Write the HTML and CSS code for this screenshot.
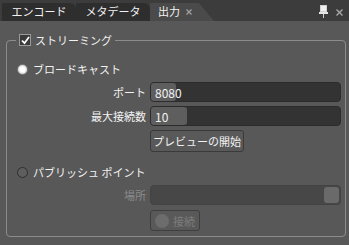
FILE: index.html
```html
<!DOCTYPE html>
<html lang="ja">
    <head>
        <meta charset="utf-8">
        <title>出力</title>
        <link rel="stylesheet" href="styles.css">
    </head>
    <body>
        <div class="tabbar">
            <div class="tab">エンコード</div>
            <div class="tab">メタデータ</div>
            <div class="tab active">出力
                <svg class="tab-close" width="6" height="6" viewBox="0 0 6 6">
                    <path d="M0.5 0.5 L5.5 5.5 M5.5 0.5 L0.5 5.5" stroke="#a0a0a0" stroke-width="1.3"/>
                </svg>
            </div>
            <div class="tab-tools">
                <svg class="pin" width="9" height="13" viewBox="0 0 9 13">
                    <rect x="1.5" y="0.5" width="6" height="6" fill="#f0f0f0" stroke="#cfcfcf"/>
                    <rect x="0" y="7" width="9" height="2" fill="#e6e6e6"/>
                    <rect x="4" y="9" width="1" height="4" fill="#d0d0d0"/>
                </svg>
                <svg class="close" width="7" height="7" viewBox="0 0 7 7">
                    <path d="M0.5 0.5 L6.5 6.5 M6.5 0.5 L0.5 6.5" stroke="#a8a8a8" stroke-width="1.4"/>
                </svg>
            </div>
        </div>

        <div class="panel">
            <fieldset class="group">
                <legend>
                    <span class="check">
                        <svg width="9" height="9" viewBox="0 0 9 9">
                            <path d="M1 4.5 L3.5 7.2 L8 1" fill="none" stroke="#ffffff" stroke-width="1.8"/>
                        </svg>
                    </span>
                    ストリーミング
                </legend>

                <div class="option">
                    <span class="radio on"></span>
                    ブロードキャスト
                </div>

                <div class="form">
                    <label>ポート</label>
                    <div class="field"><span class="fill" style="width: 25px"></span><span class="value">8080</span></div>
                    <label>最大接続数</label>
                    <div class="field"><span class="fill" style="width: 36px"></span><span class="value">10</span></div>
                    <span></span>
                    <div><button class="btn">プレビューの開始</button></div>
                </div>

                <div class="option second">
                    <span class="radio"></span>
                    パブリッシュ ポイント
                </div>

                <div class="form">
                    <label class="disabled">場所</label>
                    <div class="field off"><span class="thumb"></span></div>
                    <span></span>
                    <div><button class="btn off"><span class="dot"></span>接続</button></div>
                </div>
            </fieldset>
        </div>
    </body>
</html>
```

FILE: styles.css
```css
body {
    margin: 0;
    background-color: #585858;
    color: #f2f2f2;
    font-family: "Noto Sans CJK JP", "Noto Sans", sans-serif;
    font-size: 11px;
    width: 349px;
    height: 245px;
    overflow: hidden;
}

.tabbar {
    height: 21px;
    background-color: #3c3c3c;
    display: flex;
    align-items: flex-end;
    padding-left: 2px;
}

.tab {
    height: 18px;
    width: 74px;
    background-color: #2e2e2e;
    border-radius: 0 6px 0 0;
    display: flex;
    align-items: center;
    justify-content: center;
    line-height: 1;
    padding-bottom: 1px;
    box-sizing: border-box;
}

.tab.active {
    width: 64px;
    background-color: #4a4a4a;
    clip-path: polygon(0 0, 49px 0, 64px 100%, 0 100%);
    justify-content: flex-start;
    padding-left: 8px;
}

.tab-close {
    margin-left: 6px;
    margin-top: 1px;
}

.tab-tools {
    margin-left: auto;
    align-self: stretch;
    display: flex;
    align-items: flex-start;
    gap: 8px;
    padding: 5px 6px 0 0;
}

.tab-tools .close {
    margin-top: 4px;
}

.panel {
    padding: 12px 3px 0 6px;
}

.group {
    margin: 0;
    height: 204px;
    box-sizing: border-box;
    border: 1px solid #8c8c8c;
    border-radius: 4px;
    padding: 0 4px 0 10px;
}

.group legend {
    margin-left: -1px;
    padding: 0 3px 0 3px;
    display: flex;
    align-items: center;
    gap: 4px;
    line-height: 14px;
}

.check {
    width: 10px;
    height: 10px;
    border: 1px solid #9a9a9a;
    background-color: #3a3a3a;
    display: flex;
    align-items: center;
    justify-content: center;
}

.option {
    display: flex;
    align-items: center;
    gap: 5px;
    margin-top: 15px;
    height: 14px;
}

.option.second {
    margin-top: 13px;
}

.radio {
    width: 9px;
    height: 9px;
    border-radius: 50%;
    border: 1px solid #2e2e2e;
    background-color: #5e5e5e;
}

.radio.on {
    border-color: #7a7a7a;
    background: radial-gradient(circle, #ffffff 35%, #d8d8d8 70%, #b0b0b0 100%);
}

.form {
    display: grid;
    grid-template-columns: 129px 1fr;
    column-gap: 4px;
    row-gap: 4px;
    align-items: center;
    margin-top: 6px;
}

.form label {
    text-align: right;
}

.form label.disabled {
    color: #8c8c8c;
}

.field {
    position: relative;
    height: 20px;
    box-sizing: border-box;
    border: 1px solid #2c2c2c;
    border-radius: 4px;
    background-color: #333333;
    display: flex;
    align-items: center;
}

.field .fill {
    position: absolute;
    left: 0;
    top: 0;
    bottom: 0;
    background-color: #5e5e5e;
    border-radius: 3px;
}

.field .value {
    position: relative;
    padding-left: 4px;
    font-size: 12px;
}

.field.off {
    background-color: #474747;
    border-color: #434343;
    justify-content: flex-end;
    padding-right: 1px;
}

.field.off .thumb {
    width: 15px;
    height: 16px;
    background-color: #6a6a6a;
    border-radius: 3px;
}

.btn {
    font-family: inherit;
    font-size: 11px;
    color: #f2f2f2;
    background-color: #595959;
    border: 1px solid #3a3a3a;
    border-radius: 3px;
    height: 22px;
    padding: 0 2px;
    display: flex;
    align-items: center;
}

.btn.off {
    height: 21px;
    margin-top: 1px;
    color: #7c7c7c;
    padding: 0 4px 0 4px;
    gap: 4px;
    border-color: #3e3e3e;
}

.dot {
    width: 14px;
    height: 14px;
    border-radius: 50%;
    background-color: #6c6c6c;
}
```
